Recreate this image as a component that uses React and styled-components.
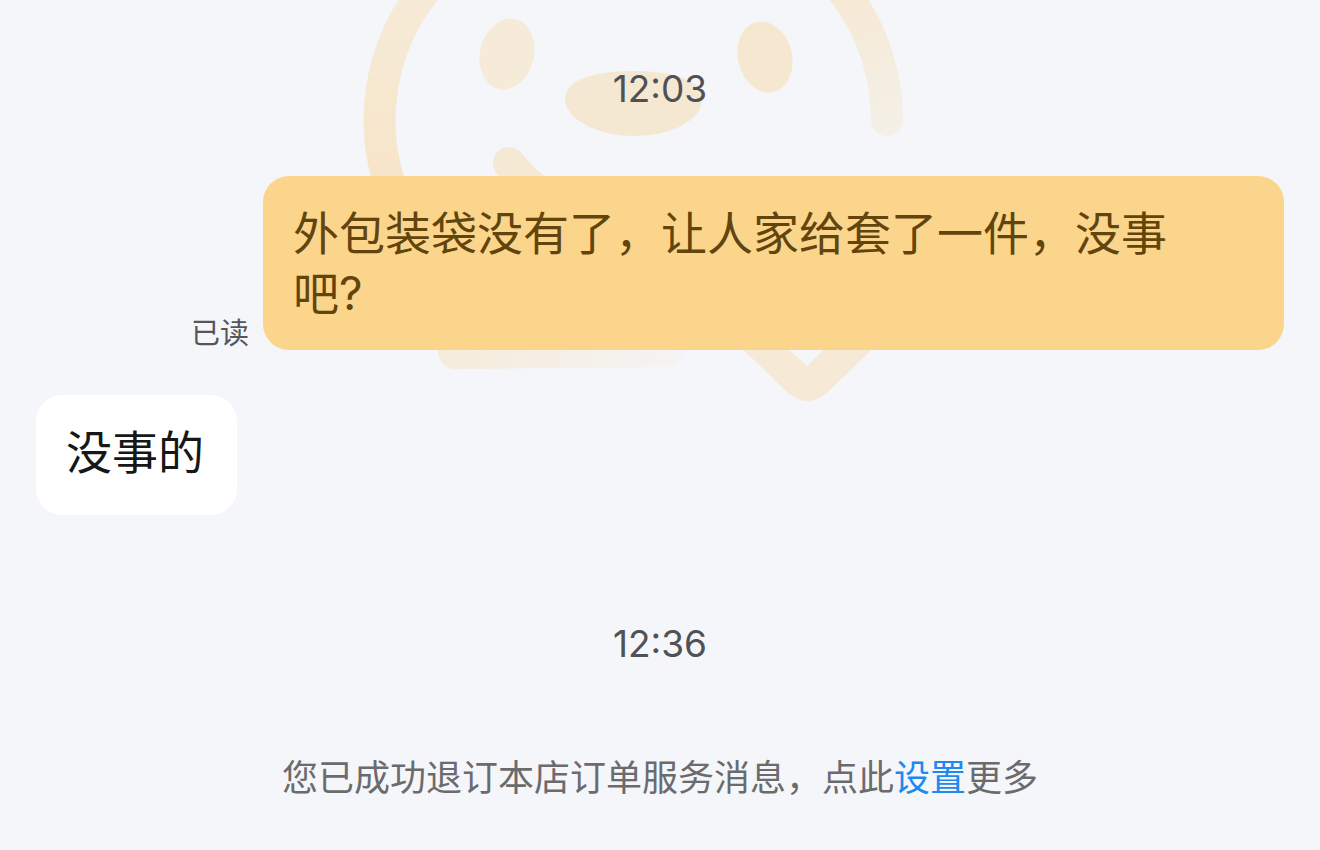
import React from 'react'
import styled, { createGlobalStyle } from 'styled-components'

export default function App() {
  return (
    <>
      <GlobalStyle />
      <ChatLayout>
        <Mascot />
        <Time dateTime="12:03">12:03</Time>
        <SentRow>
          <ReadState>已读</ReadState>
          <SentBubble>外包装袋没有了，让人家给套了一件，没事吧?</SentBubble>
        </SentRow>
        <ReceivedRow>
          <ReceivedBubble>没事的</ReceivedBubble>
        </ReceivedRow>
        <Time dateTime="12:36">12:36</Time>
        <Notice>
          您已成功退订本店订单服务消息，点此<a href="#settings">设置</a>更多
        </Notice>
      </ChatLayout>
    </>
  )
}

const Mascot = () => (
  <Watermark viewBox="0 0 1320 420" aria-hidden="true">
    <defs>
      <linearGradient id="face" gradientUnits="userSpaceOnUse" x1="400" y1="0" x2="380" y2="176">
        <stop offset="0" stopColor="#f6ebd7" />
        <stop offset="1" stopColor="#f7e5c9" />
      </linearGradient>
      <linearGradient id="cheek" gradientUnits="userSpaceOnUse" x1="840" y1="0" x2="880" y2="136">
        <stop offset="0" stopColor="#f6e9d5" />
        <stop offset="1" stopColor="#f4f0e7" />
      </linearGradient>
      <linearGradient id="base" gradientUnits="userSpaceOnUse" x1="438" y1="0" x2="684" y2="0">
        <stop offset="0" stopColor="#f6ebda" />
        <stop offset="1" stopColor="#f4f4f4" />
      </linearGradient>
    </defs>
    <g fill="none" strokeWidth="32" strokeLinecap="round" strokeLinejoin="round">
      <path d="M398 205A207 207 0 0 1 434 -20" stroke="url(#face)" />
      <path d="M834 -20A213 213 0 0 1 887 120" stroke="url(#cheek)" />
      <path d="M509 163Q522 180 548 200" stroke="#f6e9d4" />
    </g>
    <path d="M721 328L788 393Q807 409 827 393L894 328H846L807 366L766 328Z" fill="#f6ead6" />
    <ellipse cx="507" cy="54" rx="27" ry="36" transform="rotate(14 507 54)" fill="#f6ebd8" />
    <ellipse cx="765" cy="57" rx="27" ry="36" transform="rotate(-14 765 57)" fill="#f6e7d0" />
    <path d="M565 99C565 79 596 71 634 71C674 71 702 80 702 99C702 120 672 136 634 136C597 136 565 119 565 99Z" fill="#f5e8d3" />
    <path d="M438 320H684V350Q682 367 662 367L456 369Q439 369 438 350Z" fill="url(#base)" />
  </Watermark>
)

const GlobalStyle = createGlobalStyle`
  * {
    box-sizing: border-box;
  }

  body {
    margin: 0;
    background-color: #f4f6fa;
    font-family: Inter, 'Noto Sans CJK SC', sans-serif;
  }
`

const ChatLayout = styled.main`
  display: flex;
  flex-direction: column;

  position: relative;
  isolation: isolate;

  min-height: 100vh;
  padding: 59px 36px 40px;
`

const Watermark = styled.svg`
  position: absolute;
  top: 0;
  left: 0;
  z-index: -1;

  width: 100%;
`

const Time = styled.time`
  color: #515155;
  font-size: 37px;
  line-height: 60px;
  text-align: center;
`

const SentRow = styled.div`
  display: flex;
  align-items: flex-end;
  justify-content: flex-end;
  gap: 14px;

  margin-top: 57px;
  padding-left: 155px;
`

const ReadState = styled.span`
  flex-shrink: 0;

  color: #55565b;
  font-size: 29px;
  line-height: 32px;
`

const Bubble = styled.p`
  min-height: 120px;
  margin: 0;

  border-radius: 26px;

  font-size: 46px;
  line-height: 60px;
`

const SentBubble = styled(Bubble)`
  flex: 1;
  padding: 27px 76px 27px 30px;

  background-color: #fcd58c;
  color: #61450c;
`

const ReceivedRow = styled.div`
  display: flex;

  margin-top: 45px;
  margin-bottom: 99px;
`

const ReceivedBubble = styled(Bubble)`
  padding: 27px 33px 27px 30px;

  background-color: #fff;
  color: #171717;
`

const Notice = styled.p`
  margin: 74px 0 0;

  color: #6b6b6d;
  font-size: 36px;
  line-height: 60px;
  text-align: center;

  a {
    color: #2089f0;
    text-decoration: none;
  }
`
